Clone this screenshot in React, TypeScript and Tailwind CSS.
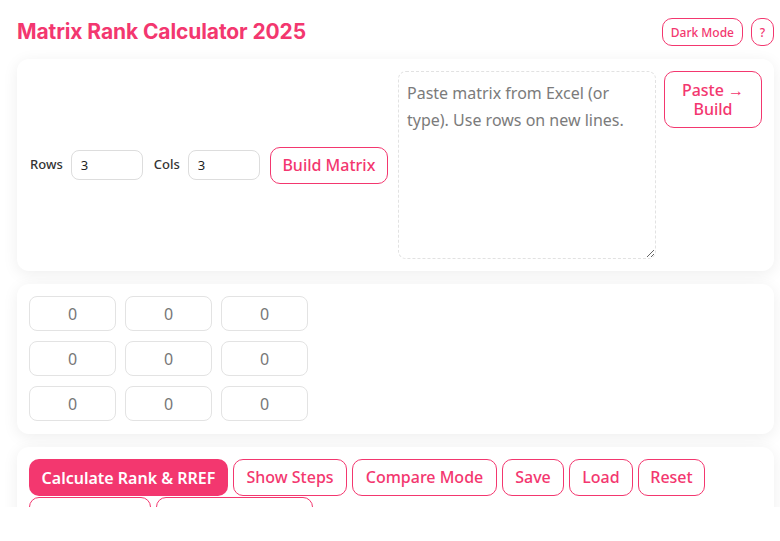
import React from "react";

function OutlineBtn({ children, className = "" }: { children: React.ReactNode; className?: string }) {
  return (
    <button
      className={`border border-[#f3376f] text-[#f3376f] bg-white rounded-[10px] font-medium leading-[19px] ${className}`}
    >
      {children}
    </button>
  );
}

function Card({ children, className = "" }: { children: React.ReactNode; className?: string }) {
  return (
    <div className={`bg-white rounded-[12px] shadow-[0_3px_16px_rgba(0,0,0,0.07)] p-3 ${className}`}>
      {children}
    </div>
  );
}

export default function App() {
  const cells = [0, 1, 2];
  return (
    <div className="w-[780px] h-[541px] bg-white">
      <div
        className="h-[507px] overflow-hidden pl-[17px] pr-[6px] pt-[18px] flex flex-col gap-[13px]"
        style={{ fontFamily: '"Noto Sans", "Open Sans", sans-serif' }}
      >
        <header className="flex items-center h-[28px]">
          <h1
            className="text-[21px] font-bold text-[#f3376f] tracking-[-0.1px]"
            style={{ fontFamily: 'Inter, "Noto Sans", sans-serif' }}
          >
            Matrix Rank Calculator 2025
          </h1>
          <div className="ml-auto flex gap-2">
            <OutlineBtn className="h-[28px] px-2 text-[12px] rounded-[8px]">Dark Mode</OutlineBtn>
            <OutlineBtn className="h-[28px] w-[23px] text-[12px] rounded-[8px]">?</OutlineBtn>
          </div>
        </header>

        <Card className="flex items-center">
          <label className="text-[13px] font-medium text-[#333] ml-px mr-2">Rows</label>
          <input
            defaultValue="3"
            className="w-[72px] h-[30px] border border-[#dddddd] rounded-[8px] px-[9px] text-[13px] text-[#222] outline-none"
          />
          <label className="text-[13px] font-medium text-[#333] ml-[11px] mr-2">Cols</label>
          <input
            defaultValue="3"
            className="w-[72px] h-[30px] border border-[#dddddd] rounded-[8px] px-[9px] text-[13px] text-[#222] outline-none"
          />
          <OutlineBtn className="ml-[10px] h-[37px] w-[120px] text-[16px]">Build Matrix</OutlineBtn>
          <div className="ml-[10px] flex items-start gap-2">
            <textarea
              placeholder="Paste matrix from Excel (or type). Use rows on new lines."
              className="w-[258px] h-[188px] border border-dashed border-[#e2e2e2] rounded-[8px] px-[8px] py-[8px] text-[16px] leading-[27px] placeholder:text-[#7b7b7b] outline-none"
            />
            <OutlineBtn className="w-[98px] h-[57px] text-[16px]">
              Paste →<br />Build
            </OutlineBtn>
          </div>
        </Card>

        <Card className="pt-[12px] pb-[13px] flex flex-col gap-[10px]">
          {cells.map((r) => (
            <div key={r} className="flex gap-[9px]">
              {cells.map((c) => (
                <input
                  key={c}
                  defaultValue="0"
                  className="w-[87px] h-[35px] border border-[#e3e3e3] rounded-[8px] text-center text-[16px] text-[#777] outline-none"
                />
              ))}
            </div>
          ))}
        </Card>

        <Card className="flex flex-wrap gap-x-[5px] gap-y-px">
          <button className="h-[37px] w-[199px] rounded-[10px] bg-[#f3376f] text-white text-[16px] font-semibold">
            Calculate Rank &amp; RREF
          </button>
          <OutlineBtn className="h-[37px] w-[114px] text-[16px]">Show Steps</OutlineBtn>
          <OutlineBtn className="h-[37px] w-[145px] text-[16px]">Compare Mode</OutlineBtn>
          <OutlineBtn className="h-[37px] w-[62px] text-[16px]">Save</OutlineBtn>
          <OutlineBtn className="h-[37px] w-[64px] text-[16px]">Load</OutlineBtn>
          <OutlineBtn className="h-[37px] w-[67px] text-[16px]">Reset</OutlineBtn>
          <OutlineBtn className="h-[37px] w-[122px] text-[16px]">Export CSV</OutlineBtn>
          <OutlineBtn className="h-[37px] w-[157px] text-[16px]">Copy Result</OutlineBtn>
        </Card>
      </div>
    </div>
  );
}
